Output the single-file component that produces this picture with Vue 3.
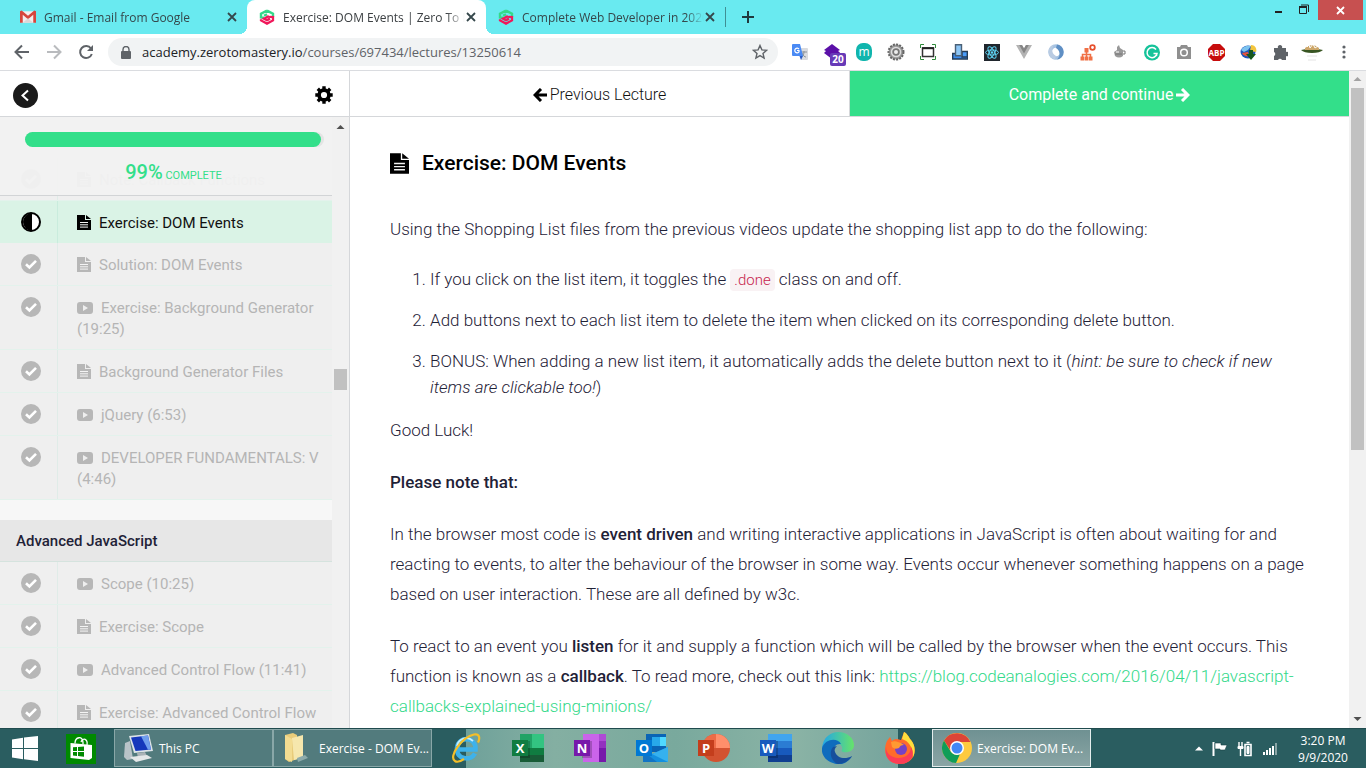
<script setup>
const tabs = [
  { title: 'Gmail - Email from Google', icon: 'gmail', active: false },
  { title: 'Exercise: DOM Events | Zero To M', icon: 'ztm', active: true },
  { title: 'Complete Web Developer in 2020', icon: 'ztm', active: false },
]

const lectures = [
  { title: 'Note: Callback Functions', type: 'doc' },
  { title: 'Exercise: DOM Events', type: 'doc', current: true },
  { title: 'Solution: DOM Events', type: 'doc' },
  { title: 'Exercise: Background Generator (19:25)', type: 'video' },
  { title: 'Background Generator Files', type: 'doc' },
  { title: 'jQuery (6:53)', type: 'video' },
  { title: 'DEVELOPER FUNDAMENTALS: V (4:46)', type: 'video' },
]

const advanced = [
  { title: 'Scope (10:25)', type: 'video' },
  { title: 'Exercise: Scope', type: 'doc' },
  { title: 'Advanced Control Flow (11:41)', type: 'video' },
  { title: 'Exercise: Advanced Control Flow', type: 'doc' },
]

const sections = [
  { heading: '', items: lectures },
  { heading: 'Advanced JavaScript', items: advanced },
]

const extensions = [
  'translate', 'purple', 'm', 'gear', 'frame', 'device', 'react', 'vue', 'ring', 'tree',
  'grey', 'grammarly', 'camera', 'abp', 'globe', 'puzzle', 'avatar', 'menu',
]

const pinned = ['ie', 'excel', 'onenote', 'outlook', 'powerpoint', 'word', 'edge', 'firefox']
const office = {
  excel: { letter: 'X', tile: '#107c41', colors: ['#21a366', '#33c481', '#107c41', '#185c37'] },
  onenote: { letter: 'N', tile: '#7719aa', colors: ['#ca64ea', '#ae4bd5', '#9332bf', '#7719aa'] },
  word: { letter: 'W', tile: '#185abd', colors: ['#41a5ee', '#2b7cd3', '#185abd', '#103f91'] },
}
const progress = 99
</script>

<template>
  <div class="desktop">
    <svg class="symbols" aria-hidden="true">
      <symbol id="i-doc" viewBox="0 0 14 15">
        <path d="M0 0h8v5h6v10H0z" /><path d="M9 0l5 4H9z" />
        <path class="cut" d="M3 7.5h8M3 9.8h8M3 12.1h8" fill="none" stroke-width="1" />
      </symbol>
      <symbol id="i-video" viewBox="0 0 16 12">
        <path fill-rule="evenodd" d="M3 0h10q3 0 3 3v6q0 3-3 3H3q-3 0-3-3V3q0-3 3-3zM6 3v6l5-3z" />
      </symbol>
      <symbol id="i-check" viewBox="0 0 20 20">
        <circle cx="10" cy="10" r="10" /><path d="M5 10.2l3.4 3.2L15 6.8" fill="none" stroke="#fff" stroke-width="2.6" />
      </symbol>
      <symbol id="i-half" viewBox="0 0 20 20">
        <circle cx="10" cy="10" r="9" fill="#fff" stroke="#000" stroke-width="2" /><path d="M11 1a9 9 0 1 0 0 18z" />
      </symbol>
      <symbol id="i-close" viewBox="0 0 10 10"><path d="M1 1l8 8M9 1L1 9" fill="none" stroke="#35474b" stroke-width="1.8" /></symbol>
      <symbol id="i-ztm" viewBox="0 0 16 16">
        <path d="M8 1.6l6 3.2v3M8 1.600L2 4.800v3.700l3 .2M5 6.800l3-1.600" fill="none" stroke="#34d98a" stroke-width="2.400" />
        <path d="M2 10.200v1.200l6 3.200 6-3.200V8L11 7.800M11 9.600l-3 1.500-3-1.500 4-2.200 2 .800" fill="none" stroke="#f0185a" stroke-width="2.300" />
      </symbol>
      <symbol id="i-gmail" viewBox="0 0 14 12">
        <path d="M1 1h12v10H1z" fill="#f3eeee" /><path d="M0 1v10h2.400V4L7 8l4.600-4v7H14V1l-1.500-.7L7 5 1.500.3z" fill="#d6463c" /><path d="M2.500 11L7 7l4.500 4z" fill="#ddd6d6" />
      </symbol>
    </svg>

    <header class="tabstrip">
      <div v-for="tab in tabs" :key="tab.title" class="tab" :class="{ active: tab.active }">
        <svg class="favicon"><use :href="'#i-' + tab.icon" /></svg>
        <span class="tab-title">{{ tab.title }}</span>
        <button class="tab-close" aria-label="Close tab"><svg width="10" height="10"><use href="#i-close" /></svg></button>
      </div>
      <button class="new-tab" aria-label="New tab"><svg width="12" height="12" viewBox="0 0 12 12"><path d="M6 0v12M0 6h12" stroke="#20393d" stroke-width="2" /></svg></button>
      <div class="window-buttons">
        <button aria-label="Minimize"><svg width="8" height="20" viewBox="0 0 8 20"><path d="M1 12h7" stroke="#222" stroke-width="2" /></svg></button>
        <button aria-label="Restore"><svg width="10" height="20" viewBox="0 0 10 20"><path d="M.5 7.500h7v6h-7zM2 5h7.500v7" fill="none" stroke="#222" /><path d="M0 7h8" stroke="#222" stroke-width="2" /></svg></button>
        <button class="window-close" aria-label="Close"><svg width="9" height="9" viewBox="0 0 9 9"><path d="M1 1l7 7M8 1L1 8" stroke="#fff" stroke-width="1.800" /></svg></button>
      </div>
    </header>

    <nav class="toolbar" aria-label="Browser">
      <button class="tool" aria-label="Back"><svg width="16" height="16" viewBox="0 0 16 16"><path d="M15 8H2M8 1.500L1.500 8 8 14.500" fill="none" stroke="#5f6368" stroke-width="2" /></svg></button>
      <button class="tool" aria-label="Forward"><svg width="16" height="16" viewBox="0 0 16 16"><path d="M1 8h13M8 1.500L14.500 8 8 14.500" fill="none" stroke="#b9bbbe" stroke-width="2" /></svg></button>
      <button class="tool" aria-label="Reload"><svg width="16" height="16" viewBox="0 0 16 16"><path d="M13.800 10A6 6 0 1 1 13 4.500" fill="none" stroke="#5f6368" stroke-width="2" /><path d="M15 1v6H9z" fill="#5f6368" /></svg></button>
      <div class="omnibox">
        <svg width="10" height="13" viewBox="0 0 10 13"><path d="M1 5h8q1 0 1 1v6q0 1-1 1H1q-1 0-1-1V6q0-1 1-1z" fill="#5f6368" /><path d="M2 6V3.500a3 3 0 0 1 6 0V6" fill="none" stroke="#5f6368" stroke-width="1.400" /></svg>
        <span class="url"><b>academy.zerotomastery.io</b>/courses/697434/lectures/13250614</span>
        <button class="star" aria-label="Bookmark"><svg width="16" height="16" viewBox="0 0 16 16"><path d="M8 1.500l1.900 4.400 4.700.4-3.600 3.100 1.100 4.700L8 11.600l-4.100 2.500L5 9.400 1.400 6.300l4.700-.4z" fill="none" stroke="#5f6368" stroke-width="1.400" /></svg></button>
      </div>
      <div class="extensions">
        <button v-for="ext in extensions" :key="ext" class="tool" :aria-label="ext">
          <svg v-if="ext === 'translate'" width="16" height="16" viewBox="0 0 16 16"><path d="M6 4h9q1 0 1 1v10q0 1-1 1H9z" fill="#d9dbdf" /><path d="M9 8h6M12 7v1c0 3-2 4-3 5M10 9c1 3 3 4 4 4" stroke="#8b9298" fill="none" /><path d="M1 0h7l3 12H1q-1 0-1-1V1q0-1 1-1z" fill="#4a8af4" /><path d="M7.500 12h3.500l-2 4z" fill="#2a5cc5" /><path d="M7 5.200A2.300 2.300 0 1 0 7 7.800V6.500H5" fill="none" stroke="#fff" stroke-width="1.200" /></svg>
          <template v-else-if="ext === 'purple'">
            <svg width="16" height="16" viewBox="0 0 16 16"><path d="M8 0l8 6-2 1 2 1.500L8 15 0 9l2-2-2-1z" fill="#5b10a8" /></svg>
            <span class="count">20</span>
          </template>
          <svg v-else-if="ext === 'm'" width="16" height="18" viewBox="0 0 16 18"><rect width="16" height="18" rx="7" fill="#10b5ad" /><text x="8" y="13" text-anchor="middle" font-size="12" fill="#fff">m</text></svg>
          <svg v-else-if="ext === 'gear'" width="18" height="18" viewBox="0 0 18 18"><circle cx="9" cy="9" r="7.500" fill="#999" stroke="#666" stroke-width="2" stroke-dasharray="2 1.200" /><circle cx="9" cy="9" r="4.500" fill="#777" stroke="#ddd" stroke-width="1.500" /><circle cx="9" cy="9" r="2" fill="#eee" /></svg>
          <svg v-else-if="ext === 'frame'" width="16" height="16" viewBox="0 0 16 16"><path d="M2.500 4h11v8.500h-11z" fill="none" stroke="#333" stroke-width="1.500" /><path d="M2 4.200h12" stroke="#222" stroke-width="2" /><path d="M.5 4V.5H4M12 .5h3.500V4M.5 12v3.500H4M12 15.500h3.500V12" fill="none" stroke="#2f8a3b" /></svg>
          <svg v-else-if="ext === 'device'" width="16" height="16" viewBox="0 0 16 16"><path d="M.7 9.500h15V15H.7z" fill="#3b8df0" stroke="#223b57" stroke-width="1.400" /><path d="M10 7.500h5.300V13H10z" fill="#4a9dfa" stroke="#223b57" stroke-width="1.400" /><path d="M3.500.7h6v11h-6z" fill="#8cc5f5" stroke="#4a6076" stroke-width="1.400" /></svg>
          <svg v-else-if="ext === 'react'" width="16" height="17" viewBox="0 0 16 17"><path d="M0 0h16v17H0z" fill="#20262d" /><g fill="none" stroke="#5fd3f3"><ellipse cx="8" cy="8.500" rx="6.500" ry="2.500" /><ellipse cx="8" cy="8.500" rx="6.500" ry="2.500" transform="rotate(60 8 8.500)" /><ellipse cx="8" cy="8.500" rx="6.500" ry="2.500" transform="rotate(120 8 8.500)" /></g><circle cx="8" cy="8.500" r="1.300" fill="#5fd3f3" /></svg>
          <svg v-else-if="ext === 'vue'" width="16" height="15" viewBox="0 0 16 15"><path d="M0 0h6l2 3.500L10 0h6L8 14z" fill="#b4b4b4" /><path d="M3.200 0H6l2 3.500L10 0h2.800L8 8.500z" fill="#858585" /></svg>
          <svg v-else-if="ext === 'ring'" width="16" height="16" viewBox="0 0 16 16"><circle cx="8" cy="8" r="6" fill="none" stroke="#a6c3e2" stroke-width="3.500" /><path d="M9 .6a7.500 7.500 0 0 1 0 14.900C13 12 12 6 8 4z" fill="#5f8fc4" /><path d="M7 15.400A7.500 7.500 0 0 1 6 .8C3 5 4 10 8 12z" fill="#b9cbe2" /></svg>
          <svg v-else-if="ext === 'tree'" width="16" height="17" viewBox="0 0 16 17"><circle cx="12.500" cy="3.500" r="2.300" fill="none" stroke="#e7502e" stroke-width="1.800" /><path d="M6.500 6v7M2.500 14v-3.500h8V14" fill="none" stroke="#f07045" stroke-width="1.500" /><path d="M4.500 4h4v4.500h-4zM.5 12.500h4v4h-4zM5 12.500h3.500v4H5zM9 12.500h3.500v4H9z" fill="#f07045" /></svg>
          <svg v-else-if="ext === 'grey'" width="14" height="14" viewBox="0 0 14 14"><path d="M4 2l2-2 1 3 3 2v6q-4 3-8 0l-1-4 3-2z" fill="#999" /><path d="M2 9h7M10 6h2v3h-2" stroke="#777" fill="none" /><path d="M3 6h3v2H3z" fill="#ccc" /></svg>
          <svg v-else-if="ext === 'grammarly'" width="16" height="17" viewBox="0 0 16 17"><circle cx="8" cy="8.500" r="8" fill="#15c39a" /><path d="M12 5.500a5 5 0 1 0 1 4H9.500M12.500 12V9.500" fill="none" stroke="#fff" stroke-width="1.500" /></svg>
          <svg v-else-if="ext === 'camera'" width="14" height="14" viewBox="0 0 14 14"><path d="M4 0h6l1 2h3v12H0V2h3z" fill="#8f8f8f" /><circle cx="7" cy="7.500" r="3.300" fill="none" stroke="#fff" stroke-width="1.500" /></svg>
          <svg v-else-if="ext === 'abp'" width="17" height="17" viewBox="0 0 17 17"><path d="M5 0h7l5 5v7l-5 5H5l-5-5V5z" fill="#c70d0d" /><text x="8.500" y="11.500" text-anchor="middle" font-size="8" font-weight="700" fill="#fff">ABP</text></svg>
          <svg v-else-if="ext === 'globe'" width="17" height="16" viewBox="0 0 17 16"><ellipse cx="8" cy="8" rx="7.500" ry="6.500" fill="#1f56b8" /><path d="M1 6c2-4 7-5 10-4l-3 4-4 2z" fill="#7cc3ef" /><path d="M2 9l6-1 1 4c-3 1-6-1-7-3z" fill="#e6533b" /><path d="M11 1c5 0 6 5 5 7l-6-1z" fill="#f3c53c" /><path d="M9 6h4v4h3l-5 6-5-6h3z" fill="#17571c" /></svg>
          <svg v-else-if="ext === 'puzzle'" width="15" height="16" viewBox="0 0 15 16"><path d="M1 4h4a2.200 2.200 0 1 1 4 0h4v4a2.200 2.200 0 1 1 0 4v4H9a2.200 2.200 0 0 0-4 0H1v-4a2.200 2.200 0 0 0 0-4z" fill="#5f6368" /></svg>
          <svg v-else-if="ext === 'avatar'" width="22" height="18" viewBox="0 0 22 18"><path d="M0 7q11-3 22 0-3 3-11 3T0 7z" fill="#385522" /><path d="M4 5q7-6 14 0v2H4z" fill="#cda76a" /><path d="M6 4l2-2 1 3 3-4 2 4 3-2" stroke="#fff" fill="none" /><path d="M6 13h10M7 17h8" stroke="#e4e4e4" /></svg>
          <svg v-else width="4" height="16" viewBox="0 0 4 16" fill="#5f6368"><circle cx="2" cy="3" r="1.600" /><circle cx="2" cy="8" r="1.600" /><circle cx="2" cy="13" r="1.600" /></svg>
        </button>
      </div>
    </nav>

    <div class="page">
      <aside class="sidebar">
        <div class="sidebar-head">
          <a href="#" class="back" aria-label="Back to course"><svg width="25" height="25" viewBox="0 0 25 25"><circle cx="12.500" cy="12.500" r="12.500" fill="#1a1a1a" /><path d="M15 7.500l-5.500 5 5.500 5" fill="none" stroke="#fff" stroke-width="2" /></svg></a>
          <button class="settings" aria-label="Settings"><svg width="18" height="18" viewBox="0 0 18 18"><circle cx="9" cy="9" r="4.900" fill="none" stroke="#000" stroke-width="3.600" /><path d="M9 .3v3.200M9 14.500v3.200M.3 9h3.200M14.500 9h3.200M2.800 2.800l2.300 2.300M12.900 12.900l2.300 2.300M2.800 15.200l2.300-2.300M12.900 5.100l2.300-2.300" stroke="#000" stroke-width="3.400" /></svg></button>
        </div>
        <div class="sidebar-body">
          <div class="curriculum">
            <div class="progress">
              <div class="track"><div class="fill" :style="{ width: progress + '%' }"></div></div>
              <p><strong>{{ progress }}%</strong> COMPLETE</p>
            </div>
            <section v-for="section in sections" :key="section.heading">
              <h2 v-if="section.heading">{{ section.heading }}</h2>
              <ul>
                <li v-for="item in section.items" :key="item.title" :class="{ current: item.current }">
                  <span class="status"><svg width="20" height="20"><use :href="item.current ? '#i-half' : '#i-check'" /></svg></span>
                  <a href="#">
                    <svg v-if="item.type === 'doc'" class="kind doc"><use href="#i-doc" /></svg>
                    <svg v-else class="kind video"><use href="#i-video" /></svg>{{ item.title }}</a>
                </li>
              </ul>
            </section>
          </div>
          <div class="scrollbar side">
            <svg class="arrow" viewBox="0 0 17 17"><path d="M4.500 12l4-4 4 4z" fill="#505050" /></svg>
            <i class="before"></i><i class="thumb"></i><i class="after"></i>
          </div>
        </div>
      </aside>

      <main>
        <div class="lecture-nav">
          <a href="#"><svg width="14" height="14" viewBox="0 0 14 14"><path d="M8 1L2 7l6 6M2 7h12" fill="none" stroke="#000" stroke-width="3" /></svg>Previous Lecture</a>
          <a href="#" class="next">Complete and continue<svg width="14" height="14" viewBox="0 0 14 14"><path d="M6 1l6 6-6 6M12 7H0" fill="none" stroke="#fff" stroke-width="3" /></svg></a>
        </div>
        <article>
          <h1><svg width="19" height="21"><use href="#i-doc" /></svg>Exercise: DOM Events</h1>
          <p>Using the Shopping List files from the previous videos update the shopping list app to do the following:</p>
          <ol>
            <li>If you click on the list item, it toggles the <code>.done</code> class on and off.</li>
            <li>Add buttons next to each list item to delete the item when clicked on its corresponding delete button.</li>
            <li>BONUS: When adding a new list item, it automatically adds the delete button next to it (<em>hint: be sure to check if new items are clickable too!</em>)</li>
          </ol>
          <p>Good Luck!</p>
          <p><strong>Please note that:</strong></p>
          <p>In the browser most code is <strong>event driven</strong> and writing interactive applications in JavaScript is often about waiting for and reacting to events, to alter the behaviour of the browser in some way. Events occur whenever something happens on a page based on user interaction. These are all defined by w3c.</p>
          <p>To react to an event you <strong>listen</strong> for it and supply a function which will be called by the browser when the event occurs. This function is known as a <strong>callback</strong>. To read more, check out this link: <a href="#">https://blog.codeanalogies.com/2016/04/11/javascript-callbacks-explained-using-minions/</a></p>
        </article>
      </main>
      <div class="scrollbar main-scroll">
        <svg class="arrow" viewBox="0 0 17 17"><path d="M4.500 10l4-4 4 4z" fill="#a3a3a3" /></svg>
        <i class="thumb"></i><i class="after"></i>
        <svg class="arrow" viewBox="0 0 17 17"><path d="M4.500 6l4 4 4-4z" fill="#505050" /></svg>
      </div>
    </div>

    <footer class="taskbar">
      <button class="start" aria-label="Start"><svg width="26" height="25" viewBox="0 0 26 25" fill="#fff"><path d="M0 3.500l11-1.700V12H0zM12 1.600L26 0v12H12zM0 13h11v10.200L0 21.500zM12 13h14v12l-14-1.800z" /></svg></button>
      <button class="store" aria-label="Store"><svg width="30" height="30" viewBox="0 0 30 30"><path d="M0 0h30v30H0z" fill="#008a00" /><path d="M4.500 9L26 11v13l-3 2-18.500-2z" fill="#fff" /><path d="M9 9.500c0-7 8-8 8-1v2M15 8c2-5 7-3 6 3" fill="none" stroke="#fff" stroke-width="1.300" /><path d="M7 13.300l4-.3v4H7zM12 13l6-.5V17h-6zM7 18h4v4l-4-.5zM12 18h6v4.800l-6-.7z" fill="#008a00" /></svg></button>
      <button class="task">
        <svg width="30" height="28" viewBox="0 0 30 28"><path d="M1 9l5-2 3 18-6 1-3-3z" fill="#b9c3c8" /><path d="M5 2l20-2 4 17-19 2z" fill="#dde4e8" /><path d="M7 3.500L24 1.500 27 15.500l-15.500 1.500z" fill="#1538bb" /><path d="M17 2.300l7-.8 3 14-3 .3z" fill="#6f9eed" /><path d="M13 19l8-1 2 4-9 2z" fill="#a9b2b6" /><path d="M6 23l17-2 5 3-16 4z" fill="#e4e7e8" /></svg>
        This PC
      </button>
      <button class="task">
        <svg width="28" height="30" viewBox="0 0 28 30"><path d="M2 2l8-2 4 2v24l-8 3-4-3z" fill="#e9cc7a" /><path d="M9 5l11-3v23l-9 2z" fill="#f6e7ad" /><path d="M2 2l7 4v23l-7-3z" fill="#f3dc91" /><path d="M14 25l8-3 3 3-10 4z" fill="#8dabab" /></svg>
        Exercise - DOM Ev...
      </button>
      <div class="pinned">
        <button v-for="app in pinned" :key="app" :aria-label="app">
          <svg v-if="app === 'ie'" width="30" height="30" viewBox="0 0 30 30"><path d="M6 16.500h18.500c1-13-17-14-18.500-1.500-1 12 14 13 18 5.500" fill="none" stroke="#3eb2ea" stroke-width="4.600" /><path d="M6 13a9.500 9.500 0 0 1 16-5" fill="none" stroke="#c4eefc" stroke-width="1.800" /><path d="M4 28C-3 24 11 4 23 1.500c6-1 6 4 4 8M4 28c2 1.500 6 0 9-2" fill="none" stroke="#f5bf28" stroke-width="2.200" /></svg>
          <svg v-else-if="office[app]" width="32" height="28" viewBox="0 0 32 28">
            <template v-if="app === 'onenote'"><path d="M9 0h16v28H9z" fill="#ca64ea" /><path d="M25 0h7v7h-7z" fill="#ae4bd5" /><path d="M25 7h7v7h-7z" fill="#9332bf" /><path d="M25 14h7v14h-7z" fill="#7719aa" /></template>
            <template v-else><path d="M8 0h24v28H8z" :fill="office[app].colors[0]" /><path v-if="app === 'word'" d="M8 7h24v7H8z" :fill="office[app].colors[1]" /><path v-else d="M20 0h12v14H20z" :fill="office[app].colors[1]" /><path d="M8 14h24v7H8z" :fill="office[app].colors[2]" /><path d="M8 21h24v7H8z" :fill="office[app].colors[3]" /></template>
            <path d="M8 7h10v17H8z" fill="#000" opacity=".2" /><path d="M0 6h16v16H0z" :fill="office[app].tile" /><text x="8" y="18.500" text-anchor="middle" font-size="13" font-weight="700" fill="#fff">{{ office[app].letter }}</text>
          </svg>
          <svg v-else-if="app === 'outlook'" width="32" height="28" viewBox="0 0 32 28"><path d="M10 0h20v18H10z" fill="#0a64b5" /><path d="M16 3h8v9h-8z" fill="#28a8ea" /><path d="M24 3h6v9h-6z" fill="#50d9ff" /><path d="M7 17l9 3 16-7v15H7z" fill="#1490df" /><path d="M16 20l16 8V13z" fill="#35b1ef" /><path d="M7 17l14 11H7z" fill="#1274c4" /><path d="M0 6h16v16H0z" fill="#0078d4" /><text x="8" y="18.500" text-anchor="middle" font-size="13" font-weight="700" fill="#fff">O</text></svg>
          <svg v-else-if="app === 'powerpoint'" width="32" height="28" viewBox="0 0 32 28"><circle cx="18" cy="14" r="14" fill="#d35230" /><path d="M18 0v14h14A14 14 0 0 0 18 0z" fill="#ff8f6b" /><path d="M18 0v14H4A14 14 0 0 1 18 0z" fill="#ed6c47" /><path d="M0 6h16v16H0z" fill="#c43e1c" /><text x="8" y="18.500" text-anchor="middle" font-size="13" font-weight="700" fill="#fff">P</text></svg>
          <svg v-else-if="app === 'edge'" width="32" height="32" viewBox="0 0 32 32"><defs><linearGradient id="edge-g"><stop offset="0" stop-color="#23a6e8" /><stop offset="1" stop-color="#66e36a" /></linearGradient></defs><path d="M0 16C1 5 9 0 16 0c9 0 16 6 16 13 0 6-6 8-11 7-3-1 0-2-1-5-3-7-15-8-20 1z" fill="url(#edge-g)" /><path d="M0 16C3 7 15 5 19 12c-6-1-9 5-7 11 3 7 12 7 18 1-6 10-15 9-19 7C4 29-1 23 0 16z" fill="#0f6cbd" /><path d="M11 15c-5 6-1 15 5 17 6 0 12-4 14-8-7 4-15 2-17-4-1-2 0-4 2-6z" fill="#164f9c" /></svg>
          <svg v-else width="30" height="32" viewBox="0 0 30 32"><path d="M2 9l3-4 2 4c4-4 8-1 9-1l3-8c4 2 5 6 7 8 8 10 3 24-11 24C2 32-3 20 2 9z" fill="#ff6b2b" /><path d="M17 7l2-7c4 2 5 6 7 8 5 6 4 13 2 17C28 14 23 9 17 7z" fill="#ffdf3d" /><path d="M1 15c0 8 8 13 18 10 5-2 7-6 7-10 5 8-1 17-11 17S-1 25 1 15z" fill="#fb3d56" /><circle cx="16" cy="17" r="6" fill="#7542c5" /><path d="M6 10c4-2 7 0 10 1l3 2c-3 0-4 1-5 3-3 1-5 1-7-1z" fill="#ff9a32" /></svg>
        </button>
      </div>
      <button class="task running">
        <svg width="30" height="30" viewBox="0 0 30 30"><circle cx="15" cy="15" r="15" fill="#fdca3f" /><path d="M2 7.500A15 15 0 0 1 28.500 9H15L9 18z" fill="#dc4437" /><path d="M2 7.500L9 19q3 4 9 2l-4 9A15 15 0 0 1 2 7.500z" fill="#109d58" /><circle cx="15" cy="15" r="7" fill="#fff" /><circle cx="15" cy="15" r="5.500" fill="#4387f5" /></svg>
        Exercise: DOM Ev...
      </button>
      <div class="tray">
        <svg width="8" height="5" viewBox="0 0 8 5"><path d="M0 4.500L4 .5l4 4z" fill="#fff" /></svg>
        <svg width="16" height="16" viewBox="0 0 16 16"><path d="M1.500 1v14" stroke="#fff" stroke-width="2" /><path d="M3 2h6v2h6l-2 5H8V8H3z" fill="#fff" stroke="#193f43" stroke-width=".6" /></svg>
        <svg width="16" height="16" viewBox="0 0 16 16" fill="none" stroke="#fff"><path d="M2 1v4M5 1v4M3.500 6v9" stroke-width="1.400" /><path d="M1 5.500h5v2H1z" fill="#fff" /><path d="M8 3.500h6v11H8zM9.500 1.500h3" stroke-width="1.600" /><path d="M10 5.500h2v7h-2z" fill="#fff" /></svg>
        <svg width="16" height="13" viewBox="0 0 16 13"><path d="M1 10h2v3H1zM4 8h2v5H4zM7 6h2v7H7zM10 4h2v9h-2z" fill="#fff" /><path d="M13 1h2v12h-2z" fill="#8aa5a6" /></svg>
      </div>
      <div class="clock"><time>3:20 PM</time><time>9/9/2020</time></div>
    </footer>
  </div>
</template>

<style>
body { margin: 0; overflow: hidden; }
</style>

<style scoped>
* { box-sizing: border-box; }
.desktop { height: 100vh; display: flex; flex-direction: column; overflow: hidden; font-family: "Open Sans", "Noto Sans", sans-serif; font-size: 12px; }
.symbols { position: absolute; width: 0; height: 0; }
button { padding: 0; border: 0; background: none; font: inherit; color: inherit; display: flex; align-items: center; justify-content: center; }
a { color: inherit; text-decoration: none; }
svg { flex: none; }
ul, ol, p, h1, h2 { margin: 0; padding: 0; }

.tabstrip { height: 34px; flex: none; display: flex; background: #69eaf0; padding-left: 8px; }
.tab { width: 239px; display: flex; align-items: center; padding: 0 9px 0 12px; color: #35474b; position: relative; }
.tab.active { background: #fff; border-radius: 8px 8px 0 0; color: #3c4043; }
.tab.active::before, .tab.active::after { content: ""; position: absolute; bottom: 0; width: 8px; height: 8px; }
.tab.active::before { left: -8px; background: radial-gradient(circle at 0 0, transparent 8px, #fff 8px); }
.tab.active::after { right: -8px; background: radial-gradient(circle at 100% 0, transparent 8px, #fff 8px); }
.favicon { width: 16px; height: 16px; margin-right: 8px; }
.tab-title { flex: 1; min-width: 0; overflow: hidden; white-space: nowrap; mask-image: linear-gradient(to right, #000 90%, transparent); }
.tab-close { width: 12px; height: 16px; }
.new-tab { width: 44px; border-left: 1px solid #3f8f94; height: 20px; margin-top: 7px; }
.window-buttons { margin-left: auto; height: 20px; display: flex; gap: 17px; padding-right: 3px; }
.window-close { width: 45px; background: #c75050; margin-left: -8px; }

.toolbar { height: 37px; flex: none; display: flex; align-items: center; padding: 0 6px; background: #fff; border-bottom: 1px solid #dadce0; }
.tool { width: 32px; height: 32px; position: relative; }
.omnibox { flex: 1; height: 28px; margin: 0 6px; padding: 0 10px 0 13px; border-radius: 14px; background: #f1f3f4; display: flex; align-items: center; gap: 11px; font-size: 13px; color: #5f6368; }
.url { flex: 1; white-space: nowrap; }
.url b { font-weight: 400; color: #202124; }
.extensions { display: flex; }
.count { position: absolute; left: 14px; top: 17px; width: 16px; height: 13px; border-radius: 2px; background: #673ab7; color: #fff; font: 700 10px/13px "Open Sans", sans-serif; text-align: center; }

.page { flex: 1; min-height: 0; display: flex; background: #fff; font-family: Roboto, "Open Sans", sans-serif; }
.sidebar { width: 350px; flex: none; display: flex; flex-direction: column; border-right: 1px solid #d5d7da; }
.sidebar-head { height: 46px; flex: none; display: flex; align-items: center; justify-content: space-between; padding: 3px 16px 0 13px; border-bottom: 1px solid #d5d7da; }
.back { display: flex; }
.sidebar-body { flex: 1; min-height: 0; display: flex; background: #f7f7f7; }
.curriculum { flex: 1; min-width: 0; overflow: hidden; }
.progress { height: 79px; margin-bottom: -38px; padding: 15px 8px 0 25px; position: relative; z-index: 1; background: rgba(241, 241, 241, .96); border-bottom: 1px solid #d2d4d6; color: #33df8a; font-size: 11px; text-align: center; }
.track { height: 15px; border-radius: 8px; background: #e4e4e4; }
.fill { height: 15px; border-radius: 8px; background: #33df8a; }
.progress p { line-height: 24px; margin-top: 13px; padding-right: 2px; }
.progress strong { font-size: 20px; font-weight: 500; }
section + section { margin-top: 20px; }
section h2 { height: 42px; padding: 0 16px; font-size: 15px; line-height: 42px; font-weight: 500; color: #1f2237; background: #e7e7e7; border-bottom: 1px solid #d5e3de; }
section ul { list-style: none; }
section li { display: flex; background: #efefef; border-bottom: 1px solid #e3f2ec; color: #b5b5b5; fill: #b7b7b7; font-size: 15px; line-height: 21px; }
section li.current { background: #daf3e6; color: #111; fill: #000; border-bottom: 0; }
.status { width: 58px; flex: none; padding: 11px 0 0 21px; border-right: 1px solid #e0ece8; }
.current .status { border-color: #c9ecdd; }
section li a { flex: 1; padding: 12px 4px 9px 19px; }
.kind { display: inline-block; margin-right: 8px; }
.doc { width: 14px; height: 15px; vertical-align: -2px; }
.video { width: 16px; height: 12px; vertical-align: -1px; }
.cut { stroke: #f4f4f4; }

.scrollbar { width: 17px; flex: none; display: flex; flex-direction: column; background: #f1f1f1; }
.arrow { width: 17px; height: 17px; }
.thumb { margin: 0 2px; background: #c1c1c1; }
.side .before { flex: 235; }
.side .thumb { flex: 21; }
.side .after { flex: 338; }
.main-scroll .thumb { flex: 362; }
.main-scroll .after { flex: 261; }

main { flex: 1; min-width: 0; overflow: hidden; }
.lecture-nav { height: 46px; display: flex; border-bottom: 1px solid #d5d7da; font-size: 16px; font-weight: 300; color: #111; }
.lecture-nav a { flex: 1; display: flex; align-items: center; justify-content: center; gap: 3px; padding-top: 2px; border-right: 1px solid #d5d7da; }
.lecture-nav .next { background: #33df8a; color: #fff; border: 0; font-weight: 400; }
article { padding: 31px 40px; color: #1f2237; font-size: 17px; font-weight: 300; line-height: 30px; }
h1 { display: flex; align-items: center; gap: 13px; margin-bottom: 36px; font-size: 21px; line-height: 30px; font-weight: 500; color: #000; }
article p { margin-bottom: 22px; }
article strong { font-weight: 500; }
article a { color: #33d98a; }
ol { padding-left: 40px; margin-bottom: 15px; line-height: 26px; }
ol li { margin-bottom: 15px; }
code { padding: 2px 4px; border-radius: 4px; background: #f9f2f4; color: #c7254e; font: 300 15px Roboto, sans-serif; }

.taskbar { height: 40px; flex: none; display: flex; background: #2a5d60; border-top: 1px solid #204b4e; color: #fff; }
.start { width: 50px; }
.store { width: 62px; }
.task { width: 159px; margin: 0 0 1px; padding-left: 9px; gap: 5px; justify-content: flex-start; border: 1px solid #89a7a8; background: #527b7d; white-space: nowrap; }
.task:nth-of-type(3) { margin-left: 2px; }
.task:nth-of-type(4) { gap: 8px; }
.pinned { display: flex; margin: 0 1px 0 3px; padding-bottom: 1px; background: linear-gradient(to right, #2a5d60 31px, #6fa19a 31px, #84afa2 120px, #79a99d 240px, #8ab3a5 360px, #76a49d calc(100% - 33px), #2a5d60 calc(100% - 33px)); }
.pinned button { width: 62px; }
.running { border-color: #e4eded; background: linear-gradient(#6f9192, #8aa5a5); }
.tray { margin-left: auto; display: flex; align-items: center; gap: 9px; padding-right: 21px; }
.clock { width: 48px; margin-right: 19px; display: flex; flex-direction: column; align-items: center; padding-top: 3px; line-height: 17px; }
</style>
